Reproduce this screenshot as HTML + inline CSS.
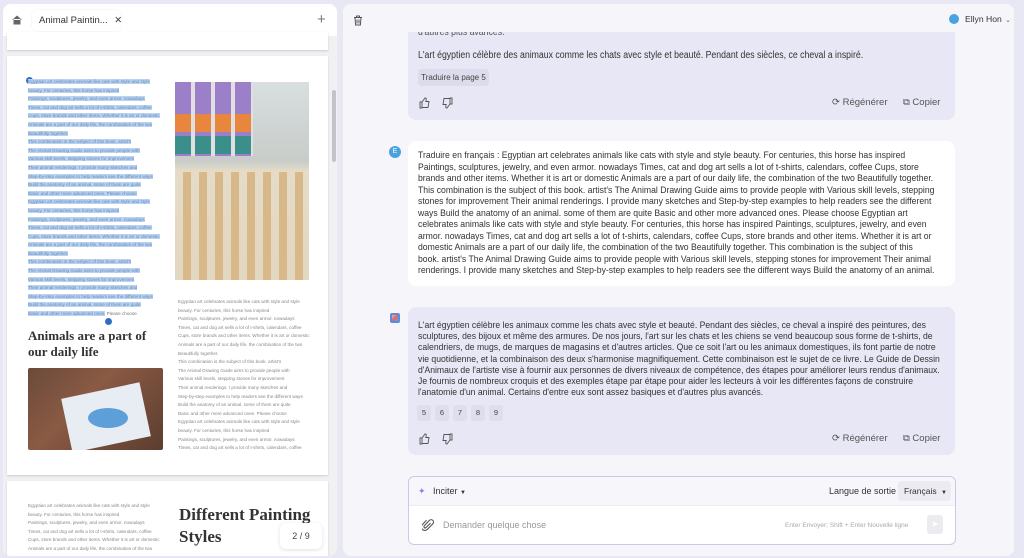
<!DOCTYPE html>
<html><head><meta charset="utf-8"><style>
*{margin:0;padding:0;box-sizing:border-box}
body{width:1024px;height:558px;background:#e8e8f4;font-family:"Liberation Sans",sans-serif;position:relative;overflow:hidden;color:#333}
.abs{position:absolute}
.lp{left:3px;top:4px;width:334px;height:552px;background:#f1f1f4;border-radius:8px;overflow:hidden}
.rp{left:343px;top:4px;width:671px;height:552px;background:#f6f6fa;border-radius:8px;overflow:hidden}
.page{background:#fff;box-shadow:0 1px 2px rgba(0,0,0,.15)}
.tl{font-size:4.6px;line-height:8.6px;color:#777;white-space:nowrap}
.tl span{background:#b9d3f3;color:#6a8bb5}
.msg{font-size:9.8px;color:#333;white-space:nowrap;transform-origin:0 0}
.hd{font-family:"Liberation Serif",serif;font-weight:bold;color:#333;white-space:nowrap}
</style></head><body>
<div class="abs lp">
 <div class="abs" style="left:0;top:0;width:334px;height:32px;background:#fff"></div>
 <svg class="abs" style="left:8px;top:10px" width="12" height="12" viewBox="0 0 12 12"><path d="M1 6L6 1.5 11 6M2.5 5v5.5h7V5" fill="#666"/></svg>
 <div class="abs" style="left:29px;top:6px;width:89px;height:21px;background:#fff;border-radius:5px;box-shadow:0 0 2px rgba(0,0,0,.08);font-size:9.5px;line-height:21px;padding-left:7px;color:#333;white-space:nowrap">Animal Paintin... <span style="margin-left:4px;color:#444">✕</span></div>
 <div class="abs" style="left:314px;top:7px;font-size:15px;color:#777">+</div>
 <div class="abs page" style="left:4px;top:28px;width:321px;height:18px"></div>
 <div class="abs" style="left:329px;top:86px;width:4px;height:72px;background:#c4c4c8;border-radius:2px"></div>
 <div class="abs page" style="left:4px;top:52px;width:321px;height:419px">
  <div class="abs" style="left:19px;top:21px;width:7px;height:7px;border-radius:50%;background:#2e6fc4"></div>
  <div class="abs tl" style="left:21px;top:22px">
   <span>Egyptian art celebrates animals like cats with style and style</span><br><span>beauty. For centuries, this horse has inspired</span><br><span>Paintings, sculptures, jewelry, and even armor. nowadays</span><br><span>Times, cat and dog art sells a lot of t-shirts, calendars, coffee</span><br><span>Cups, store brands and other items. Whether it is art or domestic</span><br><span>Animals are a part of our daily life, the combination of the two</span><br><span>Beautifully together.</span><br><span>This combination is the subject of this book. artist's</span><br><span>The Animal Drawing Guide aims to provide people with</span><br><span>Various skill levels, stepping stones for improvement</span><br><span>Their animal renderings. I provide many sketches and</span><br><span>Step-by-step examples to help readers see the different ways</span><br><span>Build the anatomy of an animal. some of them are quite</span><br><span>Basic and other more advanced ones. Please choose</span><br><span>Egyptian art celebrates animals like cats with style and style</span><br><span>beauty. For centuries, this horse has inspired</span><br><span>Paintings, sculptures, jewelry, and even armor. nowadays</span><br><span>Times, cat and dog art sells a lot of t-shirts, calendars, coffee</span><br><span>Cups, store brands and other items. Whether it is art or domestic</span><br><span>Animals are a part of our daily life, the combination of the two</span><br><span>Beautifully together.</span><br><span>This combination is the subject of this book. artist's</span><br><span>The Animal Drawing Guide aims to provide people with</span><br><span>Various skill levels, stepping stones for improvement</span><br><span>Their animal renderings. I provide many sketches and</span><br><span>Step-by-step examples to help readers see the different ways</span><br><span>Build the anatomy of an animal. some of them are quite</span><br><span>Basic and other more advanced ones.</span> Please choose
  </div>
  <div class="abs" style="left:98px;top:262px;width:7px;height:7px;border-radius:50%;background:#2e6fc4"></div>
  <div class="abs hd" style="left:21px;top:272px;font-size:13px;line-height:16px">Animals are a part of<br>our daily life</div>
  <div class="abs" style="left:21px;top:312px;width:135px;height:82px;background:linear-gradient(135deg,#6b4a3a,#8a5a44 40%,#5c3d30);border-radius:2px;overflow:hidden">
   <div class="abs" style="left:38px;top:22px;width:80px;height:55px;background:#e8edf3;transform:rotate(-12deg)"></div>
   <div class="abs" style="left:60px;top:40px;width:40px;height:20px;background:#5d9fd8;border-radius:50%"></div>
  </div>
  <div class="abs" style="left:168px;top:26px;width:134px;height:198px;background:linear-gradient(180deg,#d8dfe0 0,#c8ccc9 40%,#e5dcc8 45%,#e2d7c0 100%)">
   <div class="abs" style="left:0;top:0;width:78px;height:74px;background:repeating-linear-gradient(90deg,#9b7fc8 0 16px,#e2dfe0 16px 20px)"></div>
   <div class="abs" style="left:0;top:32px;width:78px;height:18px;background:repeating-linear-gradient(90deg,#e8863e 0 16px,#e2dfe0 16px 20px)"></div>
   <div class="abs" style="left:0;top:54px;width:78px;height:18px;background:repeating-linear-gradient(90deg,#3a8f8a 0 16px,#e2dfe0 16px 20px)"></div>
   <div class="abs" style="left:8px;top:90px;width:120px;height:108px;background:repeating-linear-gradient(90deg,#d8b889 0 8px,transparent 8px 16px)"></div>
  </div>
  <div class="abs tl" style="left:171px;top:242px;color:#888">Egyptian art celebrates animals like cats with style and style<br>beauty. For centuries, this horse has inspired<br>Paintings, sculptures, jewelry, and even armor. nowadays<br>Times, cat and dog art sells a lot of t-shirts, calendars, coffee<br>Cups, store brands and other items. Whether it is art or domestic<br>Animals are a part of our daily life, the combination of the two<br>Beautifully together.<br>This combination is the subject of this book. artist's<br>The Animal Drawing Guide aims to provide people with<br>Various skill levels, stepping stones for improvement<br>Their animal renderings. I provide many sketches and<br>Step-by-step examples to help readers see the different ways<br>Build the anatomy of an animal. some of them are quite<br>Basic and other more advanced ones. Please choose<br>Egyptian art celebrates animals like cats with style and style<br>beauty. For centuries, this horse has inspired<br>Paintings, sculptures, jewelry, and even armor. nowadays<br>Times, cat and dog art sells a lot of t-shirts, calendars, coffee</div>
 </div>
 <div class="abs page" style="left:4px;top:477px;width:321px;height:80px">
  <div class="abs tl" style="left:21px;top:21px;color:#888">Egyptian art celebrates animals like cats with style and style<br>beauty. For centuries, this horse has inspired<br>Paintings, sculptures, jewelry, and even armor. nowadays<br>Times, cat and dog art sells a lot of t-shirts, calendars, coffee<br>Cups, store brands and other items. Whether it is art or domestic<br>Animals are a part of our daily life, the combination of the two</div>
  <div class="abs hd" style="left:172px;top:23px;font-size:17px;line-height:22px">Different Painting<br>Styles</div>
 </div>
 <div class="abs" style="left:277px;top:519px;width:42px;height:26px;background:#fff;border-radius:6px;box-shadow:0 1px 4px rgba(0,0,0,.12);font-size:9px;line-height:26px;text-align:center;color:#444">2 / 9</div>
</div>

<div class="abs rp"></div>

<!-- message 1 -->
<div class="abs" style="left:408px;top:4px;width:547px;height:116px;background:#e7e7f6;border-radius:0 0 8px 8px"></div>
<div class="abs msg" style="left:418px;top:27px;color:#555;transform:scaleX(.89)">d'autres plus avancés.</div>
<div class="abs" style="left:343px;top:4px;width:671px;height:28px;background:#f6f6fa;border-radius:8px 8px 0 0"></div>
<svg class="abs" style="left:353px;top:15px" width="10" height="11" viewBox="0 0 10 11"><path d="M1 2.5h8M3.5 2.5V1h3v1.5M2 2.5l.6 7.5h4.8L8 2.5M4 4.5v4M6 4.5v4" fill="none" stroke="#555" stroke-width="1"/></svg>
<div class="abs" style="left:949px;top:14px;width:10px;height:10px;border-radius:50%;background:#4aa3e0"></div>
<div class="abs" style="left:965px;top:14px;font-size:8.6px;color:#333;white-space:nowrap">Ellyn Hon <span style="font-size:7px;color:#666;margin-left:1px">⌄</span></div>

<div class="abs msg" style="left:418px;top:50px;transform:scaleX(.89)">L'art égyptien célèbre des animaux comme les chats avec style et beauté. Pendant des siècles, ce cheval a inspiré.</div>
<div class="abs" style="left:418px;top:69px;width:71px;height:17px;background:#dcdcec;border-radius:4px;font-size:8px;line-height:17px;text-align:center;color:#444;white-space:nowrap">Traduire la page 5</div>

<!-- message 2 -->
<div class="abs" style="left:389px;top:146px;width:12px;height:12px;border-radius:50%;background:#4aa3e0;font-size:7px;color:#fff;text-align:center;line-height:12px">E</div>
<div class="abs" style="left:408px;top:141px;width:547px;height:145px;background:#fff;border-radius:8px"></div>
<div class="abs msg" style="left:418px;top:150px;font-size:9.5px;line-height:11.5px;transform:scaleX(.91)">Traduire en français : Egyptian art celebrates animals like cats with style and style beauty. For centuries, this horse has inspired<br>Paintings, sculptures, jewelry, and even armor. nowadays Times, cat and dog art sells a lot of t-shirts, calendars, coffee Cups, store<br>brands and other items. Whether it is art or domestic Animals are a part of our daily life, the combination of the two Beautifully together.<br>This combination is the subject of this book. artist's The Animal Drawing Guide aims to provide people with Various skill levels, stepping<br>stones for improvement Their animal renderings. I provide many sketches and Step-by-step examples to help readers see the different<br>ways Build the anatomy of an animal. some of them are quite Basic and other more advanced ones. Please choose Egyptian art<br>celebrates animals like cats with style and style beauty. For centuries, this horse has inspired Paintings, sculptures, jewelry, and even<br>armor. nowadays Times, cat and dog art sells a lot of t-shirts, calendars, coffee Cups, store brands and other items. Whether it is art or<br>domestic Animals are a part of our daily life, the combination of the two Beautifully together. This combination is the subject of this<br>book. artist's The Animal Drawing Guide aims to provide people with Various skill levels, stepping stones for improvement Their animal<br>renderings. I provide many sketches and Step-by-step examples to help readers see the different ways Build the anatomy of an animal.</div>

<!-- message 3 -->
<div class="abs" style="left:390px;top:313px;width:10px;height:10px;border:2px solid #5a8be0;border-radius:2px;background:linear-gradient(135deg,#f5c84a,#e85a8a 50%,#4ac0a0)"></div>
<div class="abs" style="left:408px;top:307px;width:547px;height:148px;background:#e7e7f6;border-radius:8px"></div>
<div class="abs msg" style="left:418px;top:319px;font-size:9.4px;line-height:11.2px;transform:scaleX(.92)">L'art égyptien célèbre les animaux comme les chats avec style et beauté. Pendant des siècles, ce cheval a inspiré des peintures, des<br>sculptures, des bijoux et même des armures. De nos jours, l'art sur les chats et les chiens se vend beaucoup sous forme de t-shirts, de<br>calendriers, de mugs, de marques de magasins et d'autres articles. Que ce soit l'art ou les animaux domestiques, ils font partie de notre<br>vie quotidienne, et la combinaison des deux s'harmonise magnifiquement. Cette combinaison est le sujet de ce livre. Le Guide de Dessin<br>d'Animaux de l'artiste vise à fournir aux personnes de divers niveaux de compétence, des étapes pour améliorer leurs rendus d'animaux.<br>Je fournis de nombreux croquis et des exemples étape par étape pour aider les lecteurs à voir les différentes façons de construire<br>l'anatomie d'un animal. Certains d'entre eux sont assez basiques et d'autres plus avancés.</div>
<div class="abs" style="left:417px;top:405px;display:flex;gap:4px">
 <div style="width:14px;height:16px;background:#dedeed;border-radius:3px;font-size:7.5px;line-height:16px;text-align:center;color:#444">5</div>
 <div style="width:14px;height:16px;background:#dedeed;border-radius:3px;font-size:7.5px;line-height:16px;text-align:center;color:#444">6</div>
 <div style="width:14px;height:16px;background:#dedeed;border-radius:3px;font-size:7.5px;line-height:16px;text-align:center;color:#444">7</div>
 <div style="width:14px;height:16px;background:#dedeed;border-radius:3px;font-size:7.5px;line-height:16px;text-align:center;color:#444">8</div>
 <div style="width:14px;height:16px;background:#dedeed;border-radius:3px;font-size:7.5px;line-height:16px;text-align:center;color:#444">9</div>
</div>

<!-- action rows -->
<svg class="abs" style="left:419px;top:97px" width="34" height="12" viewBox="0 0 34 12"><path d="M1 5h2v6H1zM3 5l3-4c1 0 1.5.6 1.2 1.6L6.8 4.5H10l-1 6H3" fill="none" stroke="#555" stroke-width=".9"/><path d="M33 7h-2V1h2zM31 7l-3 4c-1 0-1.5-.6-1.2-1.6l.4-1.9H24l1-6h6" fill="none" stroke="#555" stroke-width=".9"/></svg>
<svg class="abs" style="left:419px;top:433px" width="34" height="12" viewBox="0 0 34 12"><path d="M1 5h2v6H1zM3 5l3-4c1 0 1.5.6 1.2 1.6L6.8 4.5H10l-1 6H3" fill="none" stroke="#555" stroke-width=".9"/><path d="M33 7h-2V1h2zM31 7l-3 4c-1 0-1.5-.6-1.2-1.6l.4-1.9H24l1-6h6" fill="none" stroke="#555" stroke-width=".9"/></svg>
<div class="abs" style="left:832px;top:97px;font-size:9.5px;color:#555;white-space:nowrap">⟳ Régénérer</div>
<div class="abs" style="left:903px;top:97px;font-size:9.5px;color:#555;white-space:nowrap">⧉ Copier</div>
<div class="abs" style="left:832px;top:433px;font-size:9.5px;color:#555;white-space:nowrap">⟳ Régénérer</div>
<div class="abs" style="left:903px;top:433px;font-size:9.5px;color:#555;white-space:nowrap">⧉ Copier</div>

<!-- input -->
<div class="abs" style="left:408px;top:476px;width:548px;height:69px;background:#fff;border:1px solid #c9c9ea;border-radius:6px">
 <div class="abs" style="left:0;top:0;width:546px;height:29px;background:#f7f7fb;border-bottom:1px solid #ececf4;border-radius:6px 6px 0 0"></div>
 <div class="abs" style="left:9px;top:9px;font-size:9px;color:#9a7ae0">✦</div>
 <div class="abs" style="left:24px;top:9px;font-size:9px;color:#333;white-space:nowrap">Inciter <span style="font-size:6px">▼</span></div>
 <div class="abs" style="left:420px;top:9px;font-size:9px;color:#333;white-space:nowrap">Langue de sortie</div>
 <div class="abs" style="left:489px;top:4px;width:53px;height:20px;background:#ebebf1;border-radius:4px;font-size:8.5px;line-height:20px;padding-left:6px;color:#333;white-space:nowrap">Français <span style="font-size:6px;margin-left:2px">▼</span></div>
 <svg class="abs" style="left:13px;top:41px" width="12" height="14" viewBox="0 0 12 14"><path d="M8.5 5L4.2 9.5a1.3 1.3 0 0 1-1.9-1.8L7.4 2.4a2.4 2.4 0 0 1 3.4 3.4L5.4 11.4a3.5 3.5 0 0 1-5-4.9L4.5 2.2" fill="none" stroke="#555" stroke-width="1.1"/></svg>
 <div class="abs" style="left:34px;top:43px;font-size:9px;color:#999;white-space:nowrap">Demander quelque chose</div>
 <div class="abs" style="left:376px;top:45px;font-size:6.5px;color:#aaa;white-space:nowrap">Enter Envoyer; Shift + Enter Nouvelle ligne</div>
 <div class="abs" style="left:518px;top:38px;width:16px;height:19px;background:#ececf0;border-radius:3px;color:#fff;font-size:9px;text-align:center;line-height:19px">➤</div>
</div>
</body></html>
